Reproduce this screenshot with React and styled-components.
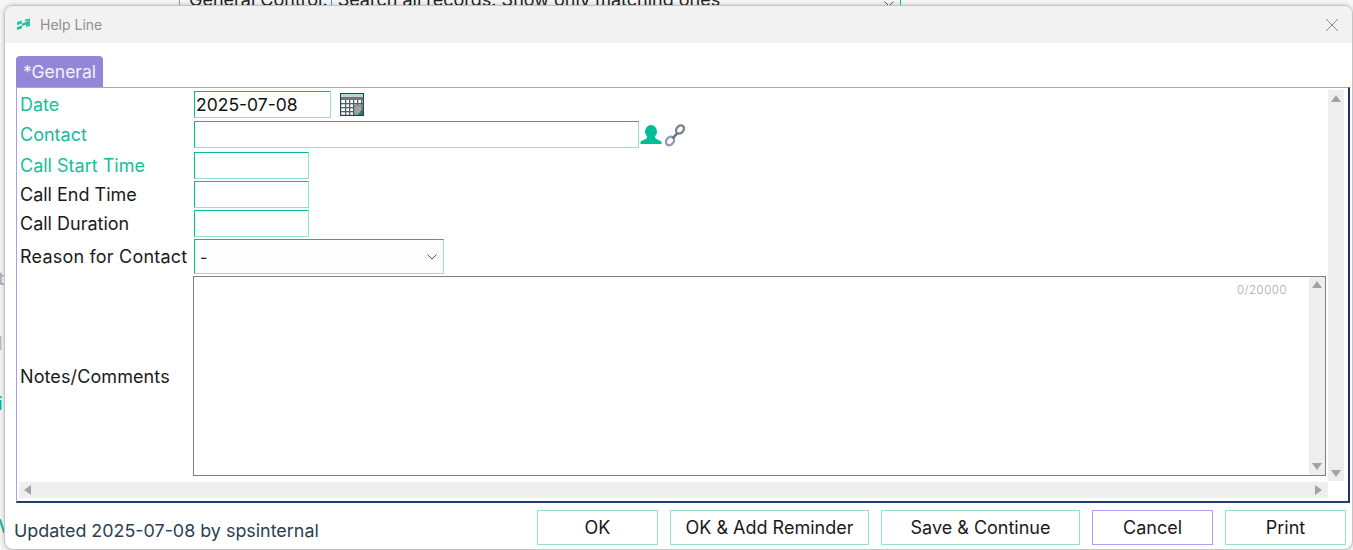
import React from "react";
import styled, { createGlobalStyle } from "styled-components";

const GlobalStyle = createGlobalStyle`
  html, body {
    margin: 0;
    padding: 0;
    background: #fff;
    overflow: hidden;
  }
  * {
    box-sizing: border-box;
  }
`;

const CalendarIcon = () => (
  <svg width="24" height="23" viewBox="0 0 24 23">
    <rect x="0.5" y="0.5" width="23" height="22" fill="#fff" stroke="#1a4a52" strokeWidth="1.4" />
    <rect x="1" y="1" width="22" height="3" fill="#b5dcc0" />
    <rect x="1" y="4" width="22" height="3" fill="#77707f" />
    {[5, 9, 13, 17, 21].map((x) => (
      <rect key={x} x={x} y="7" width="1.3" height="15" fill="#56606a" />
    ))}
    {[10, 14, 18].map((y) => (
      <rect key={y} x="1" y={y} width="22" height="1.3" fill="#56606a" />
    ))}
    <path d="M14 12h8v5l-4 5h-4z" fill="#9ea3a5" stroke="#46585a" strokeWidth="0.6" />
    <path d="M18 22l5-6v6z" fill="#2b7a68" />
  </svg>
);

const PersonIcon = () => (
  <svg width="22" height="20" viewBox="0 0 22 20">
    <ellipse cx="11" cy="6.500" rx="6" ry="6.500" fill="#00bd9a" />
    <path d="M7.500 10h7l1 3.500 6 3V19H.5v-2.500l6-3z" fill="#00bd9a" />
  </svg>
);

const LinkIcon = () => (
  <svg width="22" height="24" viewBox="0 0 22 24" fill="none">
    <ellipse cx="16" cy="6.500" rx="4.600" ry="3.400" transform="rotate(-50 16 6.500)" stroke="#7c8692" strokeWidth="2.400" />
    <ellipse cx="6" cy="18" rx="4.600" ry="3.600" transform="rotate(-50 6 18)" stroke="#8f9fb5" strokeWidth="2.400" />
    <path d="M13.500 10l-5 5.500" stroke="#68717c" strokeWidth="2.600" />
  </svg>
);

const LogoIcon = () => (
  <svg width="15" height="13" viewBox="0 0 15 13">
    <path d="M1 4l5-1.500v3L1 7z" fill="#22c8a4" />
    <path d="M1 9l5-1.500v3L1 12z" fill="#22c8a4" />
    <path d="M6 5.500l8-3v3l-8 2.500z" fill="#2fb8a0" />
    <path d="M9 1.500l5-1v2l-5 1z" fill="#22c8a4" />
    <path d="M10 6.500l4-1v2.500l-4 1z" fill="#22c8a4" />
  </svg>
);

const ArrowIcon = ({ $dir }) => {
  const paths = {
    up: "M5 1l5 7H0z",
    down: "M5 8L0 1h10z",
    left: "M0 5l7-5v10z",
    right: "M7 5L0 0v10z",
  };
  return (
    <svg width="10" height="10" viewBox="0 0 10 10">
      <path d={paths[$dir]} fill="#a3a3a3" />
    </svg>
  );
};

const App = () => {
  return (
    <>
      <GlobalStyle />
      <Page>
        <BackdropLine>
          <span>General Control:</span>
          <BackdropInput>Search all records. Show only matching ones</BackdropInput>
          <svg width="10" height="6" viewBox="0 0 10 6">
            <path d="M0.500 0.500L5 5l4.500-4.500" stroke="#555" fill="none" />
          </svg>
        </BackdropLine>
        <BackdropGlyph $top={268} $color="#b0b0b0">
          t
        </BackdropGlyph>
        <BackdropGlyph $top={333} $color="#c7b6a3">
          l
        </BackdropGlyph>
        <BackdropGlyph $top={393} $color="#12b594">
          i
        </BackdropGlyph>
        <BackdropGlyph $top={516} $color="#12b594">
          V
        </BackdropGlyph>
        <Dialog>
          <TitleBar>
            <TitleLeft>
              <LogoIcon />
              <Title>Help Line</Title>
            </TitleLeft>
            <CloseButton>
              <svg width="14" height="14" viewBox="0 0 14 14">
                <path d="M1 1l12 12M13 1L1 13" stroke="#8a8a8a" strokeWidth="1" fill="none" />
              </svg>
            </CloseButton>
          </TitleBar>
          <Body>
            <Tab>*General</Tab>
            <Panel>
              <PanelMain>
                <Form>
                  <Row $h={30}>
                    <Label $required>Date</Label>
                    <Field $w={137} defaultValue="2025-07-08" />
                    <IconSlot $ml={9}>
                      <CalendarIcon />
                    </IconSlot>
                  </Row>
                  <Row $h={31}>
                    <Label $required>Contact</Label>
                    <Field $w={445} />
                    <IconSlot $ml={1} $gap={2}>
                      <PersonIcon />
                      <LinkIcon />
                    </IconSlot>
                  </Row>
                  <Row $h={29}>
                    <Label $required>Call Start Time</Label>
                    <Field $w={115} />
                  </Row>
                  <Row $h={29}>
                    <Label>Call End Time</Label>
                    <Field $w={115} />
                  </Row>
                  <Row $h={29}>
                    <Label>Call Duration</Label>
                    <Field $w={115} />
                  </Row>
                  <Row $h={37}>
                    <Label $tall>Reason for Contact</Label>
                    <SelectBox>
                      <span>-</span>
                      <svg width="10" height="6" viewBox="0 0 10 6">
                        <path d="M0.500 0.500L5 5l4.500-4.500" stroke="#555" fill="none" />
                      </svg>
                    </SelectBox>
                  </Row>
                  <NotesRow>
                    <NotesLabel>Notes/Comments</NotesLabel>
                    <NotesBox>
                      <Counter>0/20000</Counter>
                      <NotesScroll>
                        <ArrowIcon $dir="up" />
                        <ArrowIcon $dir="down" />
                      </NotesScroll>
                    </NotesBox>
                  </NotesRow>
                </Form>
                <VScroll>
                  <ArrowIcon $dir="up" />
                  <ArrowIcon $dir="down" />
                </VScroll>
              </PanelMain>
              <HScroll>
                <ArrowIcon $dir="left" />
                <ArrowIcon $dir="right" />
              </HScroll>
            </Panel>
          </Body>
          <Footer>
            <Status>Updated 2025-07-08 by spsinternal</Status>
            <Buttons>
              <Button $w={121}>OK</Button>
              <Button $w={199}>OK &amp; Add Reminder</Button>
              <Button $w={199}>Save &amp; Continue</Button>
              <Button $w={121} $purple>
                Cancel
              </Button>
              <Button $w={121}>Print</Button>
            </Buttons>
          </Footer>
        </Dialog>
      </Page>
    </>
  );
};

export default App;

const Page = styled.div`
  position: relative;
  width: 1353px;
  height: 550px;
  overflow: hidden;
  background: #f6f6f6;
  font-family: Inter, "Liberation Sans", sans-serif;
`;

const BackdropLine = styled.div`
  position: absolute;
  left: 179px;
  top: -10px;
  width: 722px;
  height: 16px;
  display: flex;
  align-items: flex-start;
  justify-content: flex-start;
  padding: 0 6px 0 9px;
  border-left: 1px solid #9a9a9a;
  border-right: 1px solid #00bd9a;
  font-size: 18px;
  line-height: 20px;
  color: #222;
  white-space: nowrap;

  svg {
    margin: 11px 0 0 auto;
  }
`;

const BackdropInput = styled.span`
  margin-left: 3px;
  padding-left: 6px;
  border-left: 1px solid #00bd9a;
`;

const BackdropGlyph = styled.span`
  position: absolute;
  left: -2px;
  top: ${(p) => p.$top}px;
  font-size: 18px;
  font-weight: 500;
  line-height: 22px;
  color: ${(p) => p.$color};
`;

const Dialog = styled.div`
  position: absolute;
  left: 4px;
  top: 5px;
  width: 1349px;
  height: 545px;
  display: flex;
  flex-direction: column;
  background: #fff;
  border: 1px solid #c4c4c4;
  border-radius: 9px;
  box-shadow: 0 0 5px rgba(0, 0, 0, 0.22);
  overflow: hidden;
`;

const TitleBar = styled.div`
  flex: none;
  height: 37px;
  display: flex;
  align-items: center;
  justify-content: space-between;
  padding: 0 13px 0 11px;
  background: #f2f2f2;
`;

const TitleLeft = styled.div`
  display: flex;
  align-items: center;
  gap: 9px;
`;

const Title = styled.span`
  font-size: 14px;
  color: #8f8f8f;
`;

const CloseButton = styled.div`
  display: flex;
  margin-right: 0;
`;

const Body = styled.div`
  flex: none;
  padding: 13px 0 0 11px;
  width: 1346px;
`;

const Tab = styled.div`
  width: 87px;
  height: 31px;
  display: flex;
  align-items: center;
  justify-content: center;
  background: #9386d8;
  border-radius: 4px 4px 0 0;
  color: #f4f2ff;
  font-size: 17.500px;
`;

const Panel = styled.div`
  height: 416px;
  width: 1334px;
  padding: 2px 4px 2px 2px;
  border-top: 1px solid #a99fe8;
  border-left: 1px solid #a99fe8;
  border-right: 2px solid #26306a;
  border-bottom: 2px solid #1f3f6a;
`;

const PanelMain = styled.div`
  display: flex;
  height: 391px;
  margin-bottom: 1px;
`;

const Form = styled.div`
  flex: 1;
  min-width: 0;
  padding: 1px 0 0 1px;
`;

const Row = styled.div`
  display: flex;
  align-items: flex-start;
  height: ${(p) => p.$h}px;
`;

const Label = styled.label`
  flex: none;
  width: 174px;
  height: ${(p) => (p.$tall ? 35 : 27)}px;
  display: flex;
  align-items: center;
  font-size: 18px;
  letter-spacing: ${(p) => (p.$tall ? 0.2 : 0)}px;
  white-space: nowrap;
  color: ${(p) => (p.$required ? "#17bd9b" : "#1a1a1a")};
`;

const Field = styled.input`
  width: ${(p) => p.$w}px;
  height: 27px;
  padding: 0 2px 0 1px;
  border: 1px solid #00bd9a;
  border-right-color: #92e0cd;
  border-bottom-color: #92e0cd;
  outline: none;
  background: #fff;
  color: #111;
  font-family: inherit;
  font-size: 17.500px;
`;

const IconSlot = styled.div`
  display: flex;
  align-items: center;
  gap: ${(p) => p.$gap || 0}px;
  height: 27px;
  margin-left: ${(p) => p.$ml}px;
`;

const SelectBox = styled.div`
  width: 250px;
  height: 35px;
  display: flex;
  align-items: center;
  justify-content: space-between;
  padding: 0 6px 0 5px;
  border: 1px solid #00bd9a;
  border-right-color: #92e0cd;
  border-bottom-color: #92e0cd;
  background: #fdfdfd;
  font-size: 16px;
  color: #222;
`;

const NotesRow = styled.div`
  display: flex;
  align-items: center;
  height: 200px;
`;

const NotesLabel = styled.label`
  flex: none;
  width: 173px;
  font-size: 18px;
  letter-spacing: 0.1px;
  color: #1a1a1a;
`;

const NotesBox = styled.div`
  position: relative;
  flex: none;
  width: 1133px;
  height: 200px;
  border: 1px solid #808080;
  display: flex;
  justify-content: flex-end;
`;

const Counter = styled.span`
  position: absolute;
  right: 38px;
  top: 6px;
  font-size: 11.500px;
  font-weight: 300;
  letter-spacing: 0.5px;
  color: #a8a8a8;
`;

const NotesScroll = styled.div`
  width: 16px;
  display: flex;
  flex-direction: column;
  justify-content: space-between;
  align-items: center;
  padding: 3px 0;
  background: #eeeeee;
`;

const VScroll = styled.div`
  flex: none;
  width: 16px;
  margin-left: 3px;
  display: flex;
  flex-direction: column;
  justify-content: space-between;
  align-items: center;
  padding: 4px 0 2px;
  background: #eeeeee;
`;

const HScroll = styled.div`
  height: 16px;
  width: 1309px;
  display: flex;
  align-items: center;
  justify-content: space-between;
  padding: 0 3px 0 5px;
  background: #eeeeee;
`;

const Footer = styled.div`
  flex: none;
  display: flex;
  align-items: center;
  justify-content: space-between;
  width: 1341px;
  height: 35px;
  margin-top: 7px;
  padding-left: 9px;
`;

const Status = styled.span`
  font-size: 17.900px;
  padding-top: 5px;
  color: #2a4150;
`;

const Buttons = styled.div`
  display: flex;
  gap: 12px;
`;

const Button = styled.button`
  width: ${(p) => p.$w}px;
  height: 35px;
  padding: 0;
  background: #fff;
  border: 1px solid ${(p) => (p.$purple ? "#aaa0f5" : "#92e0cd")};
  font-family: inherit;
  font-size: 18px;
  color: #1a1a1a;
`;
